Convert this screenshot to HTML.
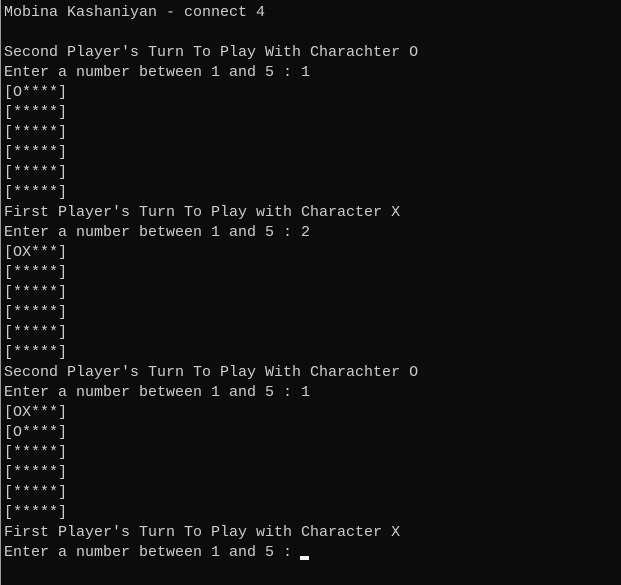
<!DOCTYPE html>
<html><head><meta charset="utf-8"><style>
html,body{margin:0;padding:0;background:#0c0c0c;width:621px;height:585px;overflow:hidden}
body{border-left:1px solid #9a9a9a;box-sizing:border-box}
pre{margin:0;position:absolute;left:4px;top:3px;font-family:"Liberation Mono",monospace;font-size:15px;line-height:20px;color:#cccccc}
.cur{position:absolute;left:300px;top:556px;width:9px;height:4px;background:#f2f2f2}
</style></head><body>
<pre>Mobina Kashaniyan - connect 4

Second Player's Turn To Play With Charachter O
Enter a number between 1 and 5 : 1
[O****]
[*****]
[*****]
[*****]
[*****]
[*****]
First Player's Turn To Play with Character X
Enter a number between 1 and 5 : 2
[OX***]
[*****]
[*****]
[*****]
[*****]
[*****]
Second Player's Turn To Play With Charachter O
Enter a number between 1 and 5 : 1
[OX***]
[O****]
[*****]
[*****]
[*****]
[*****]
First Player's Turn To Play with Character X
Enter a number between 1 and 5 : </pre>
<div class="cur"></div>
</body></html>
